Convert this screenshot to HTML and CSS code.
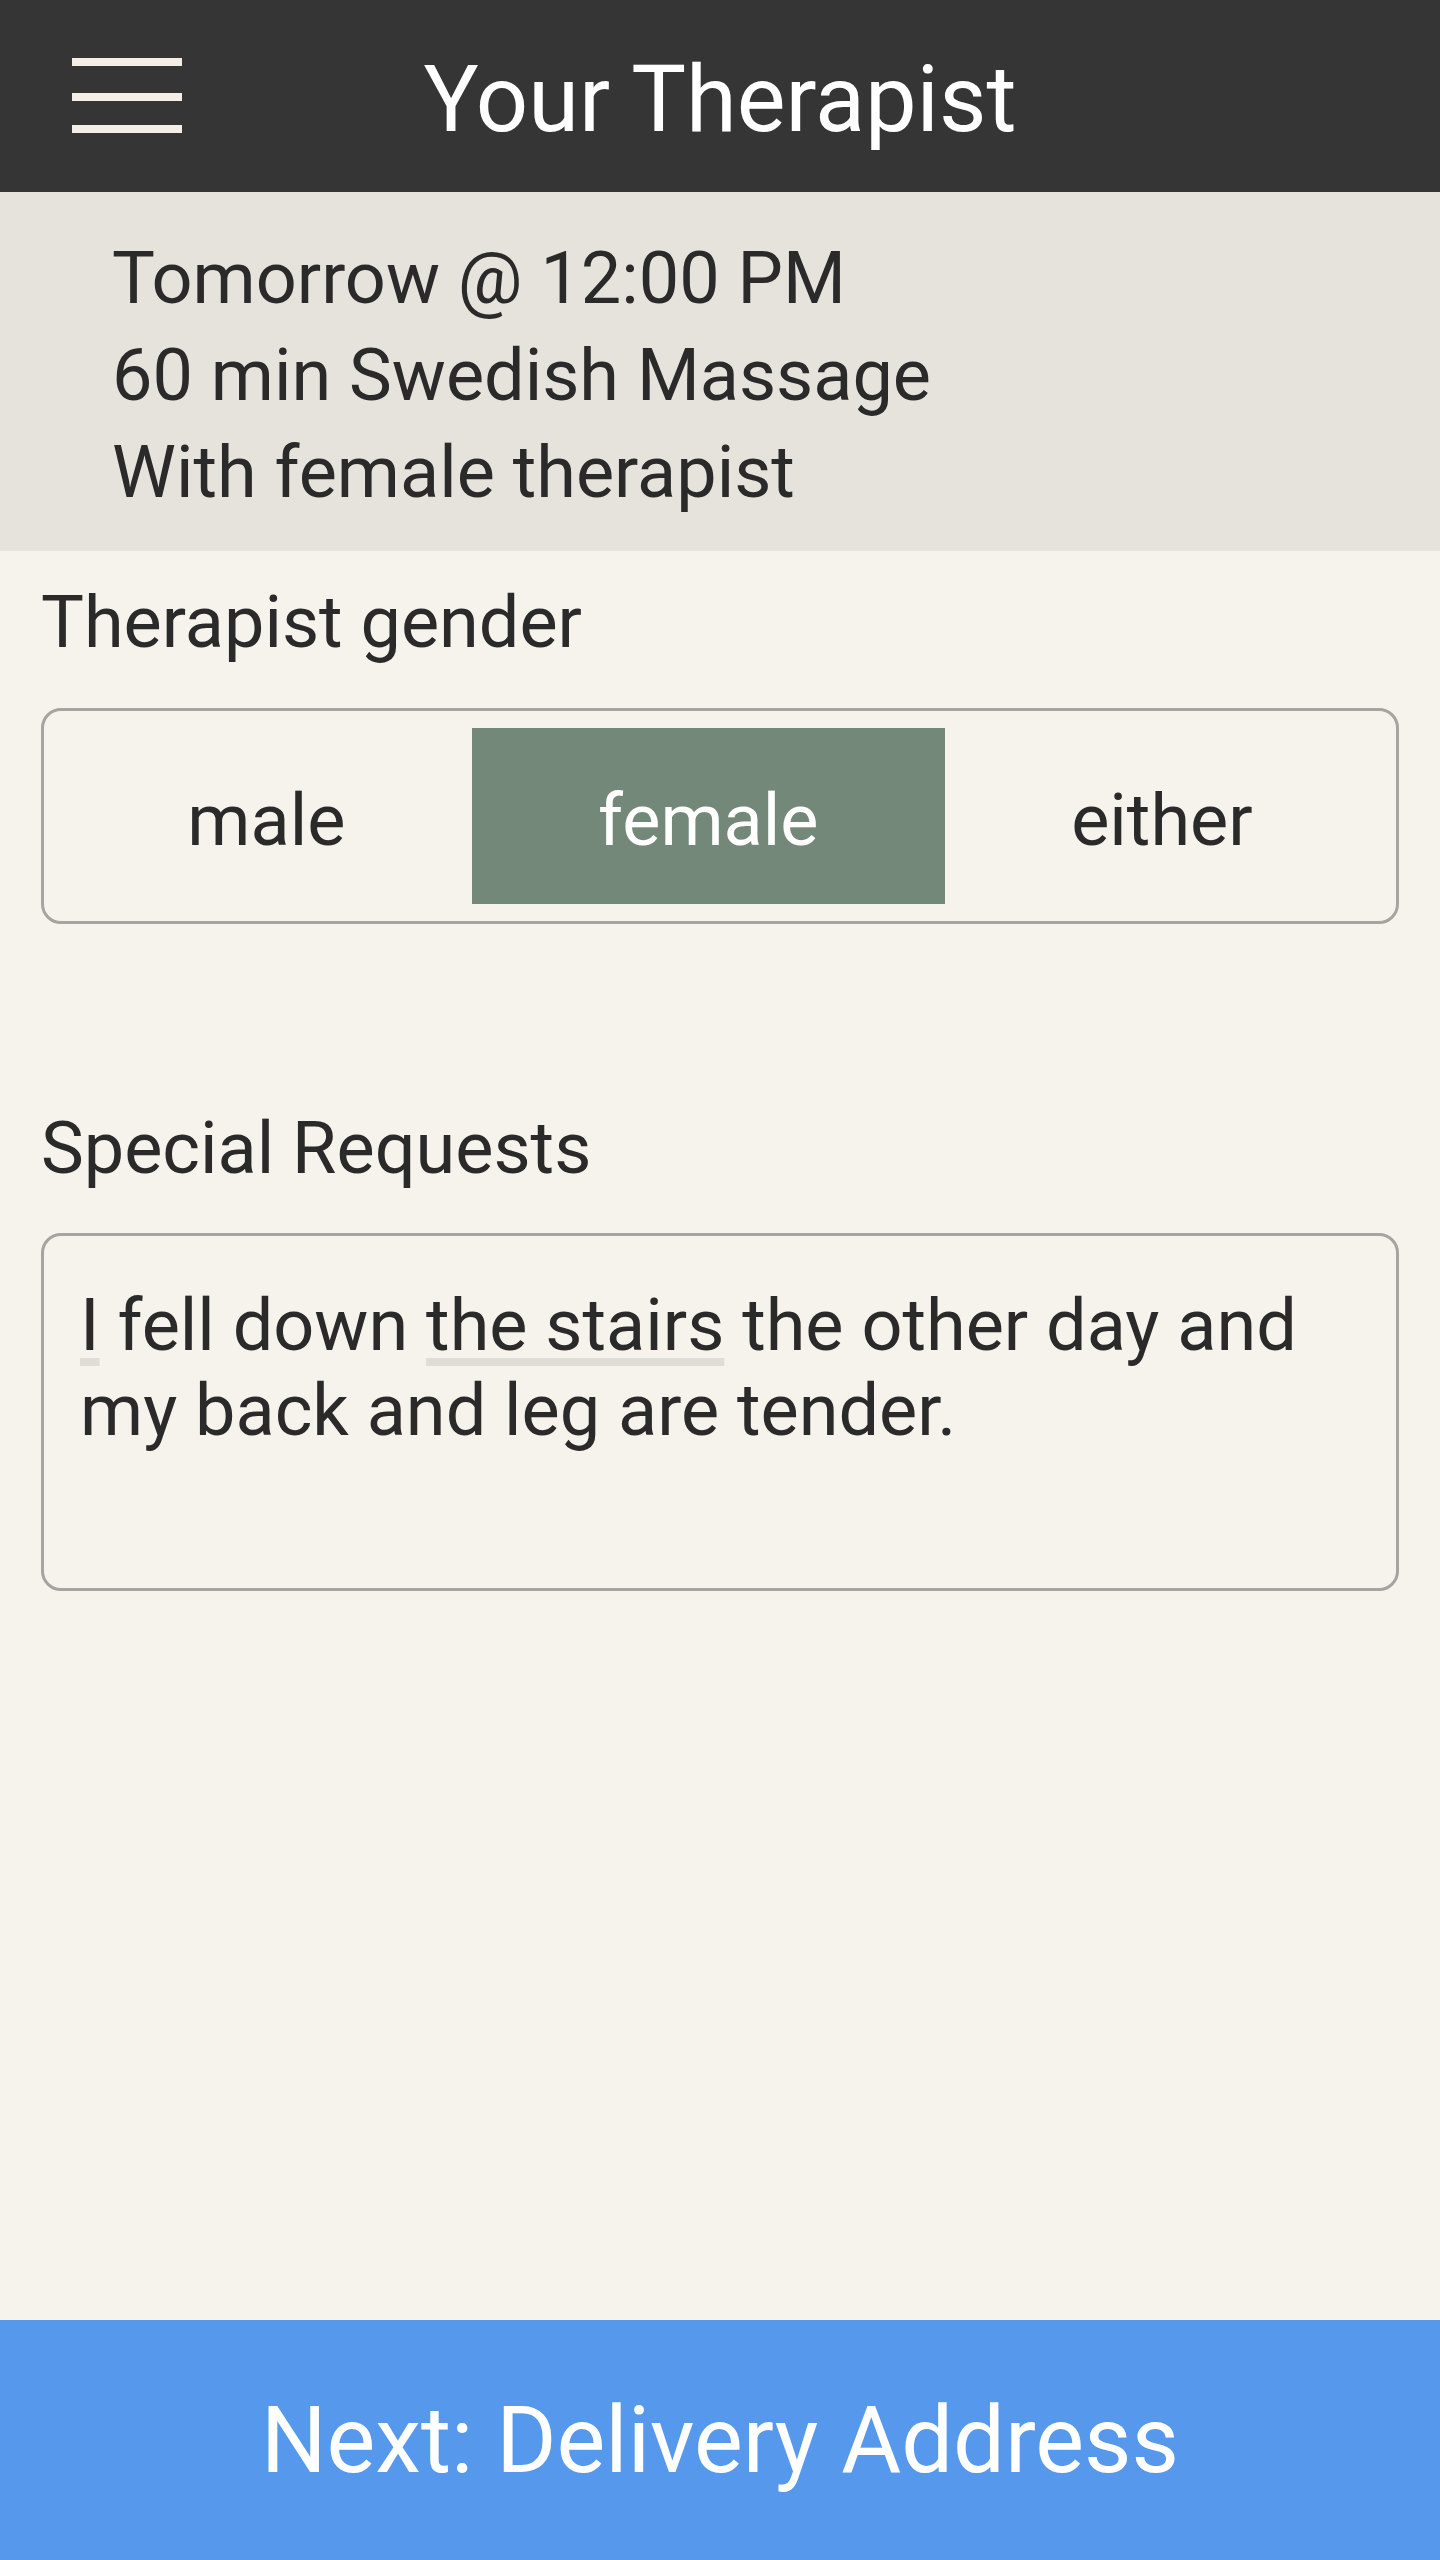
FILE: index.html
```html
<!DOCTYPE html>
<html lang="en">
<head>
    <meta charset="UTF-8">
    <meta name="viewport" content="width=device-width, initial-scale=1.0">
    <title>Your Therapist</title>
    <link rel="stylesheet" href="styles.css">
</head>
<body>
    <header class="topbar">
        <button class="menu-btn" aria-label="Menu">
            <svg width="110" height="76" viewBox="0 0 110 76">
                <rect x="0" y="0" width="110" height="8" fill="#f3eee6"/>
                <rect x="0" y="35" width="110" height="8" fill="#f3eee6"/>
                <rect x="0" y="67" width="110" height="8" fill="#f3eee6"/>
            </svg>
        </button>
        <h1 class="topbar-title">Your Therapist</h1>
    </header>

    <section class="summary">
        <p>Tomorrow @ 12:00 PM</p>
        <p>60 min Swedish Massage</p>
        <p>With female therapist</p>
    </section>

    <main class="form">
        <h2 class="field-label">Therapist gender</h2>
        <div class="segmented">
            <button class="segment">male</button>
            <button class="segment selected">female</button>
            <button class="segment">either</button>
        </div>

        <h2 class="field-label requests-label">Special Requests</h2>
        <div class="requests" contenteditable="true"><span class="composing">I</span> fell down <span class="composing">the stairs</span> the other day and my back and leg are tender.</div>
    </main>

    <button class="next-btn">Next: Delivery Address</button>
</body>
</html>
```

FILE: styles.css
```css
body {
    font-family: Roboto, "Noto Sans", sans-serif;
    margin: 0;
    padding: 0;
    min-height: 100vh;
    display: flex;
    flex-direction: column;
    background-color: #f6f3ed;
    color: #2a2a2a;
}

button {
    font-family: inherit;
}

.topbar {
    height: 192px;
    background-color: #353535;
    display: grid;
    grid-template-columns: 1fr auto 1fr;
    align-items: center;
}

.menu-btn {
    justify-self: start;
    margin-left: 72px;
    padding: 0;
    border: none;
    background: none;
    display: flex;
    cursor: pointer;
}

.topbar-title {
    margin: 0;
    font-size: 92px;
    font-weight: 400;
    color: #ffffff;
    padding-top: 6px;
}

.summary {
    background-color: #e6e3dd;
    padding: 38px 40px 30px 112px;
}

.summary p {
    margin: 0;
    font-size: 72px;
    line-height: 97px;
}

.form {
    padding: 0 41px;
}

.field-label {
    margin: 30px 0 0;
    font-size: 72px;
    font-weight: 400;
    line-height: 84px;
}

.requests-label {
    margin-top: 183px;
}

.segmented {
    margin-top: 43px;
    height: 216px;
    box-sizing: border-box;
    border: 3px solid #a6a49e;
    border-radius: 20px;
    padding: 17px;
    display: flex;
}

.segment {
    flex: 1 1 auto;
    border: none;
    background: none;
    font-size: 72px;
    color: #2a2a2a;
    padding: 8px 0 0;
    cursor: pointer;
}

.segment.selected {
    background-color: #738878;
    color: #ffffff;
}

.requests {
    margin-top: 42px;
    height: 358px;
    box-sizing: border-box;
    border: 3px solid #a6a49e;
    border-radius: 20px;
    padding: 47px 40px 47px 36px;
    font-size: 72px;
    line-height: 85px;
    outline: none;
}

.composing {
    text-decoration: underline;
    text-decoration-color: #dfddd8;
    text-decoration-thickness: 8px;
    text-underline-offset: 8px;
}

.next-btn {
    margin-top: auto;
    height: 240px;
    width: 100%;
    border: none;
    background-color: #5699ec;
    color: #ffffff;
    font-size: 92px;
    padding: 0;
    cursor: pointer;
}
```
